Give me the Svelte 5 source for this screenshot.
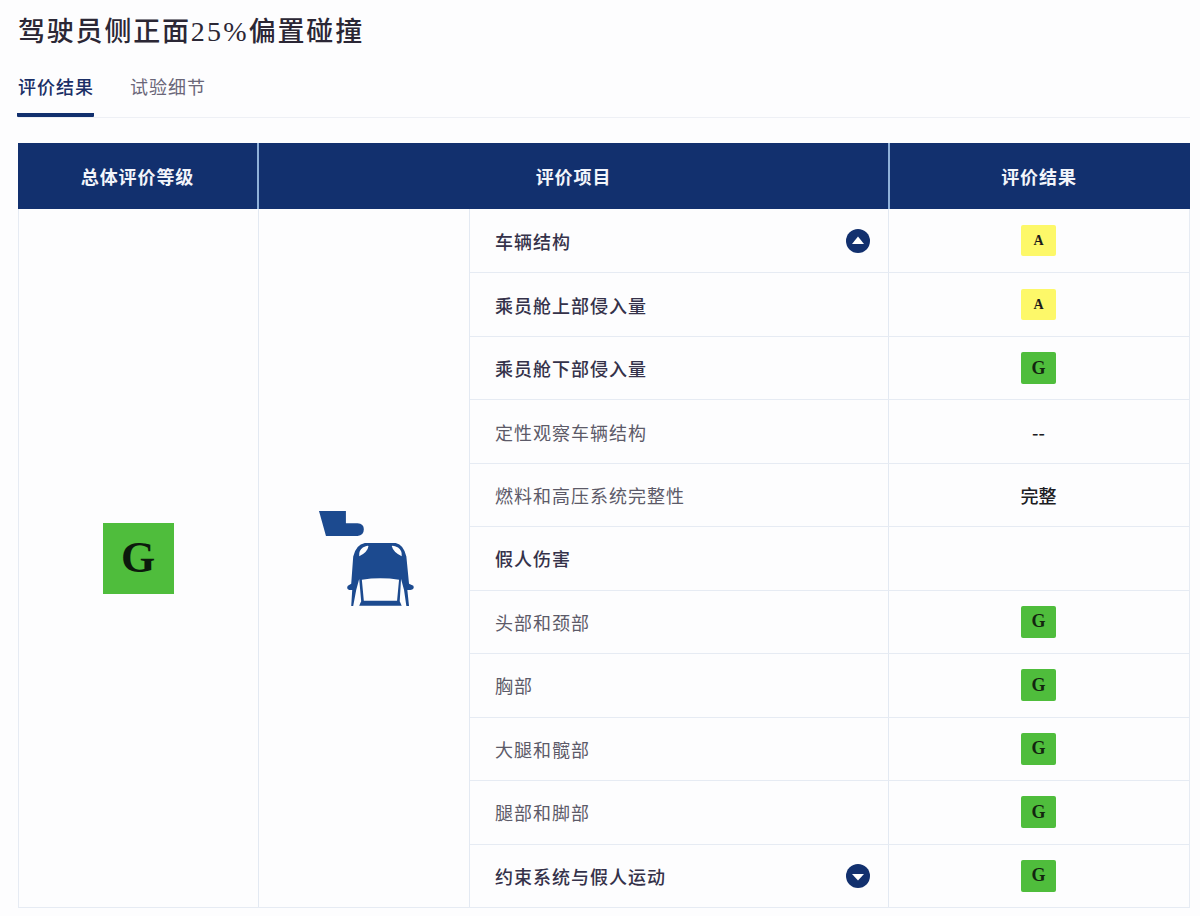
<script>
  const rows = [
    { label: '车辆结构', strong: true, grade: 'A', toggle: 'up' },
    { label: '乘员舱上部侵入量', strong: true, grade: 'A' },
    { label: '乘员舱下部侵入量', strong: true, grade: 'G' },
    { label: '定性观察车辆结构', text: '--' },
    { label: '燃料和高压系统完整性', text: '完整' },
    { label: '假人伤害', strong: true },
    { label: '头部和颈部', grade: 'G' },
    { label: '胸部', grade: 'G' },
    { label: '大腿和髋部', grade: 'G' },
    { label: '腿部和脚部', grade: 'G' },
    { label: '约束系统与假人运动', strong: true, grade: 'G', toggle: 'down' }
  ];
</script>

<main class="page">
  <h1>驾驶员侧正面<span class="num">25%</span>偏置碰撞</h1>

  <nav class="tabs">
    <span class="tab active">评价结果</span>
    <span class="tab">试验细节</span>
  </nav>

  <section class="table">
    <header class="head">
      <div>总体评价等级</div>
      <div>评价项目</div>
      <div class="last">评价结果</div>
    </header>
    <div class="body">
      <div class="overall"><span class="big">G</span></div>
      <div class="diagram">
        <svg viewBox="85 60 290 292" width="97" height="97" aria-hidden="true">
          <path class="blue" d="M87 63H168V100H203Q222 102 222 118Q222 136 203 138H108Z" />
          <path class="blue" d="M225 159H318Q342 164 350 200L358 282L371 288Q376 298 362 301H353L358 349H350L343 301L334 268L330 335L336 348H208L214 335L208 268L199 301L190 349H184L187 301H178Q168 296 174 288L184 282L190 200Q198 164 225 159Z" />
          <path class="white" d="M208 199Q206 182 219 173Q232 166 236 168Q234 186 208 199ZM336 199Q338 182 325 173Q312 166 306 168Q310 186 336 199ZM216 270Q272 261 328 270L322 333H222Z" />
        </svg>
      </div>
      <div class="items">
        {#each rows as row}
          <div class="row">
            <div class="label" class:strong={row.strong}>
              <span>{row.label}</span>
              {#if row.toggle}
                <span class="toggle">
                  <svg viewBox="0 0 24 24" width="24" height="24" aria-hidden="true">
                    <circle cx="12" cy="12" r="12" fill="#12306e" />
                    {#if row.toggle === 'up'}
                      <path d="M12 7.5L18 15H6Z" fill="#fff" />
                    {:else}
                      <path d="M6 10H18L12 16.5Z" fill="#fff" />
                    {/if}
                  </svg>
                </span>
              {/if}
            </div>
            <div class="result">
              {#if row.grade}
                <span class="badge" class:yellow={row.grade === 'A'}>{row.grade}</span>
              {:else if row.text}
                <span class="plain">{row.text}</span>
              {/if}
            </div>
          </div>
        {/each}
      </div>
    </div>
  </section>
</main>

<style>
  :global(body) {
    margin: 0;
    background: #fdfdfe;
  }
  .page {
    box-sizing: border-box;
    width: 1200px;
    height: 916px;
    padding: 13px 10px 0 18px;
    font-family: "Noto Sans CJK SC", sans-serif;
    color: #2a2a3a;
    overflow: hidden;
  }
  h1 {
    margin: 0;
    height: 34px;
    font-size: 27px;
    line-height: 34px;
    font-weight: 500;
    letter-spacing: 1.8px;
    color: #2b2735;
    white-space: nowrap;
  }
  .num {
    font-family: "Liberation Serif", serif;
    font-size: 28px;
    letter-spacing: 2.2px;
  }
  .tabs {
    display: flex;
    gap: 36px;
    margin-top: 19px;
    height: 52px;
    border-bottom: 1px solid #eef0f5;
    box-sizing: border-box;
  }
  .tab {
    width: 76px;
    height: 47px;
    font-size: 18px;
    line-height: 40px;
    letter-spacing: 1px;
    font-weight: 400;
    color: #6a6678;
    white-space: nowrap;
  }
  .active {
    width: 77px;
    color: #1b2f66;
    font-weight: 500;
    border-bottom: 4px solid #12306e;
    border-radius: 0 0 1px 1px;
    margin-left: -1px;
    text-indent: 1px;
  }
  .table {
    margin-top: 25px;
    width: 1172px;
  }
  .head {
    display: grid;
    grid-template-columns: 239px 631px 302px;
    height: 66px;
    background: #12306e;
    color: #f2f5fb;
    font-size: 18px;
    font-weight: 700;
    letter-spacing: 0.9px;
  }
  .head div {
    display: flex;
    align-items: center;
    justify-content: center;
  }
  .head div + div {
    border-left: 2px solid #8fb0d8;
    box-sizing: border-box;
  }
  .head .last {
    padding-right: 2px;
  }
  .body {
    display: grid;
    grid-template-columns: 240px 211px 719px;
    height: 699px;
    box-sizing: border-box;
    border: 1px solid #e6ebf3;
    border-top: 0;
  }
  .overall,
  .diagram {
    display: flex;
    align-items: center;
    justify-content: center;
    border-right: 1px solid #e3e9f2;
  }
  .overall {
    padding-right: 1px;
    box-sizing: border-box;
  }
  .big {
    display: flex;
    align-items: center;
    justify-content: center;
    width: 71px;
    height: 71px;
    background: #4fbd3c;
    color: #0c1a0c;
    font-family: "Liberation Serif", serif;
    font-weight: 700;
    font-size: 44px;
    line-height: 1;
  }
  .diagram {
    padding: 1px 0 0 4px;
    box-sizing: border-box;
  }
  .blue {
    fill: #1c4a8f;
  }
  .white {
    fill: #fdfdfe;
  }
  .items {
    display: grid;
    grid-auto-rows: 1fr;
  }
  .row {
    display: grid;
    grid-template-columns: 419px 1fr;
  }
  .row + .row {
    border-top: 1px solid #e6ebf3;
  }
  .label {
    display: flex;
    align-items: center;
    justify-content: space-between;
    padding: 0 18px 0 25px;
    border-right: 1px solid #e3e9f2;
    font-size: 18px;
    letter-spacing: 1px;
    color: #5c5a68;
  }
  .strong {
    color: #35324a;
    font-weight: 500;
  }
  .toggle {
    display: flex;
  }
  .result {
    display: flex;
    align-items: center;
    justify-content: center;
    padding-right: 1px;
  }
  .badge {
    display: flex;
    align-items: center;
    justify-content: center;
    width: 35px;
    height: 32px;
    border-radius: 2px;
    background: #4fbd3c;
    color: #13240f;
    font-family: "Liberation Serif", serif;
    font-weight: 700;
    font-size: 18px;
  }
  .yellow {
    height: 31px;
    background: #fdf869;
    color: #1b1b1b;
    font-size: 14px;
  }
  .plain {
    font-size: 18px;
    font-weight: 500;
    color: #1d1d24;
  }
</style>
